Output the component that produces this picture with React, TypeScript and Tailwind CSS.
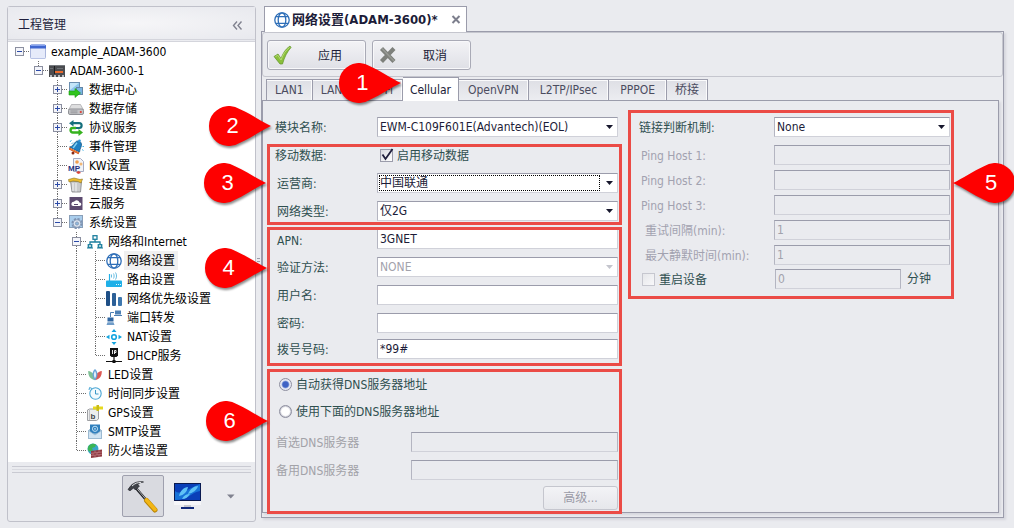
import React, { useState, type ReactNode } from "react";

const ROOT_FONT =
  "font-['DejaVu_Sans_Condensed','Noto_Sans_CJK_SC',sans-serif]";

/* ---------- tree icons, all on a 16x16 grid ---------- */

function Svg({ children, size = 16 }: { children: ReactNode; size?: number }) {
  return (
    <svg width={size} height={size} viewBox="0 0 16 16" className="block shrink-0" aria-hidden="true">
      {children}
    </svg>
  );
}

const GlobeIcon = () => (
  <Svg>
    <g fill="none" stroke="#2f6fb8" strokeWidth="1.3">
      <circle cx="8" cy="8" r="7.200" />
      <ellipse cx="8" cy="8" rx="3.8" ry="7.200" />
      <path d="M2 4.6h12M2 11.4h12" />
    </g>
  </Svg>
);

const icons: Record<string, ReactNode> = {
  project: (
    <Svg>
      <rect x="0.5" y="1.5" width="15" height="13" rx="1" fill="#e6ebfa" stroke="#aab6dc" />
      <path d="M0 2a1.5 1.5 0 0 1 1.500-1.500h13A1.500 1.500 0 0 1 16 2v2.500H0z" fill="#3f66cf" />
      <path d="M1 1.500h14" stroke="#86a3ee" />
      <path d="M1 14.500h14" stroke="#b9c4e6" />
    </Svg>
  ),
  device: (
    <Svg>
      <rect x="0" y="2" width="16" height="12" fill="#4a4c50" />
      <path d="M0 2.500h16" stroke="#777b80" />
      <rect x="5" y="3" width="1" height="8" fill="#1d1e20" />
      <rect x="6" y="8" width="8" height="2" fill="#ea6a2c" />
      <path d="M1 12h2v2H1zM5 12h2v2H5zM9 12h2v2H9zM13 12h2v2h-2z" fill="#b9bcc0" />
      <path d="M1 5.500h3M8 5.500h6" stroke="#6d7176" />
    </Svg>
  ),
  dataCenter: (
    <Svg>
      <rect x="1.500" y="0.500" width="10" height="9" fill="#8cc6ec" stroke="#6b8fb0" />
      <path d="M2 1l9 0L2 8z" fill="#c4e5f8" />
      <rect x="8.500" y="5.500" width="6" height="7" fill="#79b4e2" stroke="#6486a6" />
      <path d="M1 9h6V6.500L12.500 11 7 15.500V13H1z" fill="#2fc41c" stroke="#189a10" strokeWidth="0.600" />
    </Svg>
  ),
  drive: (
    <Svg>
      <path d="M3.500 3.500h9l3 5.500h-15z" fill="#dededf" stroke="#a3a4a8" strokeWidth="0.700" />
      <rect x="0.500" y="8" width="15" height="5.500" rx="1.500" fill="#c2c3c6" stroke="#8f9095" />
      <path d="M2.500 10h7M2.500 11.800h7" stroke="#8b8c90" strokeWidth="0.800" />
      <circle cx="12.800" cy="11" r="1.100" fill="#e03b32" />
    </Svg>
  ),
  protocol: (
    <Svg>
      <path d="M4 3.200h7.200a2.300 2.300 0 0 1 0 4.800H8" fill="none" stroke="#156f7c" strokeWidth="2.200" />
      <path d="M5.500 0v6.400L1 3.200z" fill="#156f7c" />
      <path d="M11 12.500H4.800a2.200 2.200 0 0 1 0-4.500H8" fill="none" stroke="#36b21f" strokeWidth="2.400" />
      <path d="M10.500 9v7l4.500-3.500z" fill="#36b21f" />
    </Svg>
  ),
  event: (
    <Svg>
      <path d="M8 2.500C10 1 13 2.500 13.500 5c.4 2.500-1.500 4-2 8L1.500 8C5 7.500 6 4 8 2.500z" fill="#1e7fc2" stroke="#10527f" strokeWidth="0.700" />
      <path d="M9 3.800C7.500 5 7 7.500 5 8.800" stroke="#7fd2f5" strokeWidth="1.500" fill="none" />
      <path d="M1.300 8.500l10 5-.8 1.700L1 10.500z" fill="#d43a1c" />
      <path d="M1.600 9.600l9 4.600" stroke="#f2b632" strokeWidth="0.700" />
      <circle cx="5" cy="14" r="1.500" fill="#8a2a14" />
      <circle cx="11.500" cy="1.800" r="1.300" fill="#2a93d4" />
      <path d="M2 3l1.500-2M3.500 5L5 3.500M14.500 7.500h1.500M14 10.500l1.500 1" stroke="#4fb9ea" />
    </Svg>
  ),
  kw: (
    <Svg>
      <path d="M5.500 0.500h7l3 3v10h-10z" fill="#f2f3f8" stroke="#a6acc4" />
      <circle cx="9" cy="4" r="1.800" fill="#f3a04e" />
      <circle cx="13" cy="6" r="1.500" fill="#f0b676" />
      <path d="M8 14l3-1 2 2-3 1z" fill="#d8443a" />
      <text x="0" y="13" fontSize="8" fontWeight="700" fill="#26307f" fontFamily="Liberation Sans, sans-serif">MP</text>
    </Svg>
  ),
  connect: (
    <Svg>
      <path d="M2.500 4l11 1-1 10H4z" fill="#c9cacc" stroke="#808186" strokeWidth="0.800" />
      <path d="M5 6v8M8 6v8.500" stroke="#efeff0" strokeWidth="1.200" />
      <path d="M0.500 2.500L6 1l6 1.500 2.500-.5L13 6l-3-1.500L5 4 1 5z" fill="#eebc2e" stroke="#8c7420" strokeWidth="0.600" />
    </Svg>
  ),
  cloud: (
    <Svg>
      <rect x="1.500" y="1" width="13" height="13" fill="#5d4b70" />
      <path d="M5 10h6.500a1.800 1.800 0 0 0 0-3.600 3 3 0 0 0-5.500-.6A2.100 2.100 0 0 0 5 10z" fill="#fff" />
      <path d="M6 8.500h4" stroke="#5d4b70" />
    </Svg>
  ),
  system: (
    <Svg>
      <rect x="1.500" y="0.500" width="13" height="12" fill="#a9cdec" stroke="#8a9fb8" />
      <circle cx="9" cy="8.500" r="4.600" fill="none" stroke="#7d92b2" strokeWidth="2" strokeDasharray="2.200 1.400" />
      <circle cx="9" cy="8.500" r="3.800" fill="#dfe7f2" stroke="#7f93ae" strokeWidth="0.800" />
      <circle cx="9" cy="8.500" r="1.600" fill="#8fb9e0" stroke="#7f93ae" strokeWidth="0.800" />
    </Svg>
  ),
  lan: (
    <Svg>
      <g fill="none" stroke="#1d7f9e" strokeWidth="1.300">
        <rect x="6" y="1.700" width="4" height="3.600" />
        <path d="M8 5.500V8M3 11V8h10v3" />
        <rect x="1.300" y="10.700" width="3.400" height="2.600" />
        <rect x="11.300" y="10.700" width="3.400" height="2.600" />
      </g>
      <path d="M0 14h6M10 14h6" stroke="#1d7f9e" />
    </Svg>
  ),
  globe: <GlobeIcon />,
  router: (
    <Svg>
      <rect x="0" y="8.500" width="16" height="6.500" rx="0.800" fill="#1fb0e8" />
      <path d="M3.500 2v7" stroke="#1fb0e8" strokeWidth="1.200" />
      <path d="M5.500 2.500v3M7.500 1.500c.8 1.300.8 3.700 0 5M9.500 0.500c1.400 2 1.400 5 0 7" stroke="#58b4de" fill="none" strokeWidth="0.900" />
      <path d="M10 12.500h1M12 12.500h1M14 12.500h1" stroke="#dff5fd" />
    </Svg>
  ),
  priority: (
    <Svg>
      <rect x="0" y="0" width="4" height="15" rx="1" fill="#1f4f86" />
      <rect x="6" y="2" width="4" height="13" rx="1" fill="#2d6097" />
      <rect x="12" y="6" width="4" height="9" rx="1" fill="#3f78ae" />
    </Svg>
  ),
  port: (
    <Svg>
      <rect x="9" y="0.500" width="6" height="4" fill="#4d80b4" />
      <path d="M8 5.500h8" stroke="#4d80b4" />
      <path d="M4.500 7V2.500H8" stroke="#4d80b4" fill="none" />
      <rect x="1.500" y="7.500" width="6" height="4" fill="#2f66a2" />
      <path d="M0.500 15l1-2.800h6l1 2.800z" fill="#6f9cc8" />
    </Svg>
  ),
  nat: (
    <Svg>
      <circle cx="8" cy="8" r="2.300" fill="none" stroke="#14a5e0" strokeWidth="1.600" />
      <path d="M8 0l2.500 3h-5zM8 16l2.500-3h-5zM0 8l3.500-2.300v4.600zM16 8l-3.500-2.300v4.600z" fill="#14a5e0" />
    </Svg>
  ),
  dhcp: (
    <Svg>
      <path d="M4 0h8v7.500L10.500 9h-5L4 7.500z" fill="#111" />
      <path d="M6.500 2v4M8.500 6V2.500h1.500v2H8.500" stroke="#fff" strokeWidth="0.900" fill="none" />
      <path d="M8 9v4M0 13.500h16" stroke="#111" strokeWidth="1.200" />
      <rect x="6.500" y="12" width="3" height="3" fill="#111" />
    </Svg>
  ),
  led: (
    <Svg>
      <path d="M8 13C3.500 12.500 1 9 1.200 4 5.500 4.500 8 8 8 13z" fill="#7fc096" />
      <path d="M8 13c4.500-.5 7-4 6.800-9C10.500 4.500 8 8 8 13z" fill="#dd5a55" />
      <path d="M8 13.500C4.500 9.500 5 4.500 8 2c3 2.500 3.500 7.500 0 11.500z" fill="#6ba4d8" />
      <path d="M8 11.500c-1.500-3-1.500-5 0-7.500 1.500 2.500 1.500 4.500 0 7.500z" fill="#e3effa" />
    </Svg>
  ),
  clock: (
    <Svg>
      <circle cx="8.500" cy="7.500" r="5.700" fill="#f3fafe" stroke="#4aa6d4" strokeWidth="1.100" />
      <path d="M8.500 4v4h3" fill="none" stroke="#3b98c8" />
      <path d="M2 4l.6-2.500L5 2.500" fill="none" stroke="#4aa6d4" />
    </Svg>
  ),
  gps: (
    <Svg>
      <path d="M0.500 5l2-1h9v10l-2 1.500h-9z" fill="#eceded" stroke="#9d9fa3" />
      <path d="M2.500 5v10" stroke="#c0c2c6" />
      <path d="M6 1.500h10v3H6z" fill="#e6d91f" />
      <path d="M9.500 0h2.500v6H9.500z" fill="#c9bb17" />
      <text x="3.500" y="13.500" fontSize="8" fontWeight="700" fill="#41464c" fontFamily="Liberation Sans, sans-serif">b</text>
    </Svg>
  ),
  smtp: (
    <Svg>
      <path d="M1.500 6.500L8 2l6.500 4.500v8h-13z" fill="#a9c8e0" stroke="#8fb0ca" />
      <rect x="3" y="0.500" width="10" height="9" fill="#2f7fbd" />
      <circle cx="8" cy="4.800" r="2.600" fill="none" stroke="#bfe0f5" />
      <circle cx="8" cy="4.800" r="0.900" fill="#bfe0f5" />
      <path d="M1.500 6.500L8 11l6.500-4.500v8h-13z" fill="#cfe3f2" stroke="#93b3cc" strokeWidth="0.700" />
    </Svg>
  ),
  firewall: (
    <Svg>
      <circle cx="6" cy="6" r="5.500" fill="#3aa6c8" />
      <path d="M2 2.500c2-2 5-2.500 7-1L8 4 5 5l1 2.500-4 1C0 6 1 4 2 2.500z" fill="#3cb554" />
      <path d="M4 8l11-1.500v7L4 15z" fill="#8e3a42" />
      <path d="M4 10.300l11-1.300M4 12.600l11-1.300M8 7.500v2.300M12 7V9.300M6 10.200v2.200M10 9.700v2.200M8 12.300v2.200M12 11.700V14" stroke="#c98a90" strokeWidth="0.600" />
    </Svg>
  ),
};

/* ---------- tree ---------- */

type Guide = "none" | "line" | "tee" | "end";

function Connector({ guide, state }: { guide: Guide; state?: "open" | "closed" }) {
  return (
    <svg width="19" height="19" viewBox="0 0 19 19" className="block shrink-0" aria-hidden="true" shapeRendering="crispEdges">
      <g stroke="#6d6d6d" strokeWidth="1" strokeDasharray="1 1" fill="none">
        {guide !== "none" && <path d={guide === "end" ? "M9.500 0v10" : "M9.500 0v19"} />}
        {guide === "line" ? null : (guide !== "none" || state) && <path d="M10 9.500h9" />}
      </g>
      {state && (
        <>
          <rect x="5.500" y="5.500" width="8" height="8" fill="#f4f5fa" stroke="#8b8fa0" />
          <path d={state === "open" ? "M7 9.500h5" : "M7 9.500h5M9.500 7v5"} stroke="#2b4aa8" />
        </>
      )}
    </svg>
  );
}

type Node = {
  label: string;
  icon: string;
  guides: Guide[];
  state?: "open" | "closed";
};

const top: Guide[] = ["none", "none"];
const sys: Guide[] = ["none", "none", "none"];
const net: Guide[] = ["none", "none", "none", "line"];

const nodes: Node[] = [
  { label: "example_ADAM-3600", icon: "project", guides: ["none"], state: "open" },
  { label: "ADAM-3600-1", icon: "device", guides: ["none", "end"], state: "open" },
  { label: "数据中心", icon: "dataCenter", guides: [...top, "tee"], state: "closed" },
  { label: "数据存储", icon: "drive", guides: [...top, "tee"], state: "closed" },
  { label: "协议服务", icon: "protocol", guides: [...top, "tee"], state: "closed" },
  { label: "事件管理", icon: "event", guides: [...top, "tee"] },
  { label: "KW设置", icon: "kw", guides: [...top, "tee"] },
  { label: "连接设置", icon: "connect", guides: [...top, "tee"], state: "closed" },
  { label: "云服务", icon: "cloud", guides: [...top, "tee"], state: "closed" },
  { label: "系统设置", icon: "system", guides: [...top, "end"], state: "open" },
  { label: "网络和Internet", icon: "lan", guides: [...sys, "tee"], state: "open" },
  { label: "网络设置", icon: "globe", guides: [...net, "tee"] },
  { label: "路由设置", icon: "router", guides: [...net, "tee"] },
  { label: "网络优先级设置", icon: "priority", guides: [...net, "tee"] },
  { label: "端口转发", icon: "port", guides: [...net, "tee"] },
  { label: "NAT设置", icon: "nat", guides: [...net, "tee"] },
  { label: "DHCP服务", icon: "dhcp", guides: [...net, "end"] },
  { label: "LED设置", icon: "led", guides: [...sys, "tee"] },
  { label: "时间同步设置", icon: "clock", guides: [...sys, "tee"] },
  { label: "GPS设置", icon: "gps", guides: [...sys, "tee"] },
  { label: "SMTP设置", icon: "smtp", guides: [...sys, "tee"] },
  { label: "防火墙设置", icon: "firewall", guides: [...sys, "end"] },
];

function ProjectTree() {
  const [selected, setSelected] = useState("网络设置");
  return (
    <ul role="tree" className="bg-white pb-0.5 pl-0.5 text-black">
      {nodes.map((n) => (
        <li
          key={n.label}
          role="treeitem"
          aria-level={n.guides.length}
          aria-selected={selected === n.label}
          className="flex h-[19px] items-center"
        >
          {n.guides.map((g, i) => (
            <Connector key={i} guide={g} state={i === n.guides.length - 1 ? n.state : undefined} />
          ))}
          <span className="flex w-[19px] shrink-0 pl-px">{icons[n.icon]}</span>
          <button
            type="button"
            onClick={() => setSelected(n.label)}
            className={`h-[19px] px-[3px] whitespace-nowrap ${selected === n.label ? "bg-[#f0f0f0]" : ""}`}
          >
            {n.label}
          </button>
        </li>
      ))}
    </ul>
  );
}

function Sidebar() {
  return (
    <aside className="w-[249px] shrink-0 rounded-[3px] border border-[#c0c1ca] bg-[#eaebef]">
      <div className="flex h-[35px] items-center justify-between border-b-[3px] border-double border-[#d4d5dc] bg-radial from-[#f6f6f8] to-[#e8e9ee] pt-1 pr-2.5 pl-2.5 text-[#1e1e3c]">
        <h2>工程管理</h2>
        <button type="button" aria-label="收起" className="p-0.5">
          <svg width="11" height="9" viewBox="0 0 11 9" fill="none" stroke="#80828f" strokeWidth="1.400" aria-hidden="true">
            <path d="M5 0.500L1.500 4.500 5 8.500M9.500 0.500L6 4.500l3.500 4" />
          </svg>
        </button>
      </div>
      <ProjectTree />
      <div className="mx-1 h-[13px] pt-0.5">
        <div className="h-[3px] border-b border-[#c9cad2]" />
        <div className="h-[3px] border-b border-[#d9dae0]" />
        <div className="h-[3px] border-b border-[#c9cad2]" />
      </div>
      <div className="flex items-center pb-1 pl-[114px]">
        <button type="button" aria-label="工程" className="flex size-[42px] items-center justify-center rounded-[2px] border border-[#9fa0ae] bg-[#d9dae0]">
          <svg width="34" height="34" viewBox="0 0 34 34" aria-hidden="true">
            <path d="M9 8l12 14" stroke="#1f2125" strokeWidth="2.600" />
            <path d="M10 8.500l10 12" stroke="#c9ccd0" strokeWidth="0.800" />
            <path d="M20.500 21.500L29 31" stroke="#b88408" strokeWidth="5" strokeLinecap="round" />
            <path d="M20.500 21L29 30.500" stroke="#f2b616" strokeWidth="3.600" strokeLinecap="round" />
            <path d="M2 10.500l3-4C8 3.500 12.500 2 17.500 3c-3 .3-4.500 1-5.500 2.500l1.300 1.700L9.500 11 7.500 9 4 11.800z" fill="#3e4147" stroke="#222429" strokeWidth="0.700" />
            <path d="M6 7c3-2.800 5.500-3.500 9-3.600" stroke="#e4e6e9" fill="none" />
          </svg>
        </button>
        <button type="button" aria-label="在线设备" className="ml-[9px] p-px">
          <svg width="27" height="28" viewBox="0 0 27 28" aria-hidden="true">
            <rect x="0" y="1" width="27" height="18" fill="#0a1a50" />
            <rect x="1" y="2" width="25" height="16" fill="#0a3fb8" />
            <path d="M1 18V9C7 14 15 6 26 2v7c-8 1-12 9-25 9z" fill="#1672d8" />
            <path d="M5 14c1-5 5-9 9-9-1 5-4 8-9 9zM14 12c2-5 6-8 10-8-1 4-5 7-10 8zM8 17c2-4 5-5 8-5-2 3-4 5-8 5z" fill="#5fc2f6" />
            <path d="M0 19h27v4H0z" fill="#f6f6f9" />
            <path d="M10 23h7v2h-7z" fill="#c5c7cf" />
            <path d="M7 26h13" stroke="#10287a" strokeWidth="2" />
          </svg>
        </button>
        <button type="button" aria-label="更多" className="ml-[21px] p-1">
          <svg width="8" height="5" viewBox="0 0 8 5" aria-hidden="true">
            <path d="M0 0.500h7.500L3.800 4.500z" fill="#80828f" />
          </svg>
        </button>
      </div>
    </aside>
  );
}

/* ---------- annotation pin ---------- */

function Pin({ n, className, flip = false }: { n: number; className: string; flip?: boolean }) {
  return (
    <div className={`pointer-events-none absolute z-10 h-10 w-[62px] ${className}`}>
      <svg width="62" height="40" viewBox="0 0 62 40" className="block overflow-visible drop-shadow-[1px_2px_1px_rgba(0,0,0,0.45)]" aria-hidden="true">
        <path
          d="M62 20C52 15.500 42 8 31 3.300A20 20 0 1 0 31 36.700C42 32 52 24.500 62 20Z"
          fill="#fe0000"
          transform={flip ? "matrix(-1 0 0 1 62 0)" : undefined}
        />
      </svg>
      <span
        className={`absolute top-0 flex h-10 w-10 items-center justify-center font-['Liberation_Sans',sans-serif] text-[22px] text-white ${flip ? "right-0 pr-2" : "left-0 pl-[7px]"}`}
      >
        {n}
      </span>
    </div>
  );
}

/* ---------- form controls ---------- */

const FIELD =
  "block h-5 w-full min-w-0 rounded-none border border-t-[#9b9cab] border-l-[#b4b5c1] border-r-[#d0d1d9] border-b-[#d0d1d9] pl-0.5 text-[#1c1c38] outline-none";

function TextField({ id, value = "", disabled = false, className = "" }: { id: string; value?: string; disabled?: boolean; className?: string }) {
  return (
    <input
      id={id}
      type="text"
      defaultValue={value}
      disabled={disabled}
      className={`${FIELD} disabled:border-r-[#b4b5c1] disabled:bg-[#eaebef] disabled:text-[#a2a2ac] ${disabled ? "" : "bg-white"} ${className}`}
    />
  );
}

function SelectField({ id, value, options = [], disabled = false, dotted = false }: { id: string; value: string; options?: string[]; disabled?: boolean; dotted?: boolean }) {
  return (
    <div className="relative w-full">
      <select id={id} defaultValue={value} disabled={disabled} className={`${FIELD} appearance-none bg-white pr-5 disabled:text-[#a2a2ac] disabled:opacity-100`}>
        {[value, ...options].map((o) => (
          <option key={o}>{o}</option>
        ))}
      </select>
      {dotted && <span className="pointer-events-none absolute inset-y-0.5 right-[18px] left-0.5 border border-dotted border-black" />}
      <svg width="7" height="4" viewBox="0 0 7 4" className="pointer-events-none absolute top-2 right-[5px]" aria-hidden="true">
        <path d="M0 0h7L3.500 4z" fill={disabled ? "#c4c5cd" : "#16162c"} />
      </svg>
    </div>
  );
}

function Row({ label, htmlFor, labelClass, className = "", children }: { label: string; htmlFor: string; labelClass: string; className?: string; children: ReactNode }) {
  return (
    <div className={`flex items-center ${className}`}>
      <label htmlFor={htmlFor} className={`shrink-0 pt-0.5 whitespace-nowrap ${labelClass}`}>
        {label}
      </label>
      {children}
    </div>
  );
}

const LEFT = "w-[107px] pl-[7px]";
const DIM_LEFT = "w-[141px] pl-1.5 text-[#a2a2a8]";
const RIGHT = "w-[143px] pl-2";
const DIM_RIGHT = "w-[143px] pl-2.5 text-[#a2a2b0]";
const DIM_RIGHT_IN = "w-[143px] pl-3.5 text-[#a2a2b0]";
const MARK = "relative border-[3px] border-[#eb4b46]";

function CheckBox({ id, label, checked = false, disabled = false }: { id: string; label: string; checked?: boolean; disabled?: boolean }) {
  return (
    <div className="flex items-center">
      <span className="relative mr-1 block size-[13px]">
        <input
          id={id}
          type="checkbox"
          defaultChecked={checked}
          disabled={disabled}
          className="peer block size-[13px] appearance-none border border-[#9b9cab] bg-linear-to-br from-[#d8d9e0] to-white disabled:border-[#c6c7cf] disabled:bg-linear-to-br disabled:from-[#e6e7ea] disabled:to-[#f8f8fa]"
        />
        <svg width="14" height="14" viewBox="0 0 14 14" className="pointer-events-none absolute -top-px left-0 hidden peer-checked:block" aria-hidden="true">
          <path d="M2.500 6.500L5.500 11 12.500 1" fill="none" stroke="#1e1e3c" strokeWidth="1.800" />
        </svg>
      </span>
      <label htmlFor={id} className="pt-0.5">
        {label}
      </label>
    </div>
  );
}

function Radio({ id, label, checked = false }: { id: string; label: string; checked?: boolean }) {
  return (
    <div className="flex h-5 items-center pl-[9px]">
      <input
        id={id}
        type="radio"
        name="dns"
        defaultChecked={checked}
        className="mr-1 block size-[13px] appearance-none rounded-full border border-[#8e8fa0] bg-radial from-white from-50% to-[#c5c6d0] to-70% checked:from-[#3f62c4] checked:from-35% checked:to-[#e6e8f2] checked:to-55%"
      />
      <label htmlFor={id} className="pt-0.5">
        {label}
      </label>
    </div>
  );
}

/* ---------- main document ---------- */

const tabs = [
  { name: "LAN1", pad: "px-2" },
  { name: "LAN2", pad: "px-2" },
  { name: "Wi-Fi", pad: "px-[9px]" },
  { name: "Cellular", pad: "px-[7px]" },
  { name: "OpenVPN", pad: "px-[9px]" },
  { name: "L2TP/IPsec", pad: "px-[11px]" },
  { name: "PPPOE", pad: "px-[11px]" },
  { name: "桥接", pad: "px-2" },
];

function Tabs() {
  return (
    <div role="tablist" className="relative z-[1] -mb-px flex items-end pl-1">
      {tabs.map(({ name, pad }) =>
        name === "Cellular" ? (
          <button key={name} type="button" role="tab" aria-selected="true" className={`relative h-6 border border-b-0 border-l-0 border-[#9b9cab] bg-white whitespace-nowrap text-[#1c1c38] ${pad}`}>
            {name}
            <Pin n={1} className="-top-[15px] right-full mr-0.5" />
          </button>
        ) : (
          <button key={name} type="button" role="tab" aria-selected="false" className={`h-[22px] border border-l-0 border-[#9b9cab] bg-linear-to-b from-[#dedfe5] to-[#ecedf1] whitespace-nowrap text-[#4b4c5f] shadow-[inset_-1px_1px_0_#fbfbfc] first:border-l ${pad}`}>
            {name}
          </button>
        ),
      )}
    </div>
  );
}

const TOOL =
  "flex h-[30px] w-[99px] items-center rounded-[3px] border border-[#a9aab6] bg-linear-to-b from-[#f3f3f6] to-[#dfe0e6] pl-[5px] text-[#1c1c38] shadow-[inset_0_0_0_1px_#f8f8fa]";

function Document() {
  return (
    <main className="flex min-w-0 flex-1 flex-col">
      <div className="z-[1] -mb-px flex">
        <div className="ml-[3px] flex h-[26px] items-center border border-b-0 border-[#9b9cab] bg-white pr-1 pl-[9px]">
          <GlobeIcon />
          <span className="ml-0.5 text-[13px] font-bold text-[#1c1c38]">网络设置(ADAM-3600)*</span>
          <button type="button" aria-label="关闭" className="ml-3 px-px">
            <svg width="10" height="9" viewBox="0 0 10 9" aria-hidden="true">
              <path d="M1.500 1l7 7M8.500 1l-7 7" stroke="#7d7f8d" strokeWidth="2" />
            </svg>
          </button>
        </div>
      </div>

      <div className="border border-[#9b9cab] pb-1 shadow-[2px_2px_2px_#d6d7de]">
        <div className="flex h-[45px] items-center gap-1.5 rounded-[3px] border border-[#c5c6ce] px-1">
          <button type="button" className={TOOL}>
            <svg width="20" height="20" viewBox="0 0 20 20" aria-hidden="true">
              <path d="M1 11.500L5 9l3 4.500C10 8 12.500 4 17 1l1 1.500C14 7 11.500 12 9.500 19H7z" fill="#8abf3c" stroke="#5f9427" strokeWidth="0.700" />
              <path d="M2.500 11.500l2.300-1.200L8 15C10 9 12.500 5.500 16.500 2.500" fill="none" stroke="#b6dc72" />
            </svg>
            <span className="ml-[25px] pt-0.5">应用</span>
          </button>
          <button type="button" className={TOOL}>
            <svg width="20" height="20" viewBox="0 0 20 20" aria-hidden="true">
              <path d="M3.500 3.500l12.500 13M16 3.500L3.500 16.500" stroke="#7e807c" strokeWidth="4.200" />
              <path d="M4 3.500l12 12.500" stroke="#979994" strokeWidth="1.500" />
            </svg>
            <span className="ml-[25px] pt-0.5">取消</span>
          </button>
        </div>

        <Tabs />

        <div role="tabpanel" className="mr-1 flex items-start gap-1.5 border border-[#9b9cab] pl-1 text-[#2f4f4f] shadow-[2px_2px_2px_#d6d7de]">
          <div className="w-[355px] pt-4">
            <div className="relative pr-1 pl-[3px]">
              <Row label="模块名称:" htmlFor="module" labelClass="w-[107px] pl-[5px]">
                <SelectField id="module" value="EWM-C109F601E(Advantech)(EOL)" />
              </Row>
              <Pin n={2} className="-top-[11px] right-[351px]" />
            </div>

            <section className={`${MARK} mt-[7px] pr-px pb-px`}>
              <div className="flex h-4 items-center">
                <span className="w-[110px] shrink-0 pt-0.5 pl-[5px]">移动数据:</span>
                <CheckBox id="mobile" label="启用移动数据" checked />
              </div>
              <Row label="运营商:" htmlFor="carrier" labelClass={LEFT} className="mt-2.5">
                <SelectField id="carrier" value="中国联通" options={["中国移动", "中国电信"]} dotted />
              </Row>
              <Row label="网络类型:" htmlFor="nettype" labelClass={LEFT} className="mt-2">
                <SelectField id="nettype" value="仅2G" options={["仅3G", "仅4G"]} />
              </Row>
              <Pin n={3} className="top-4 right-full mr-1" />
            </section>

            <section className={`${MARK} mt-0.5 pr-px pb-1`}>
              <Row label="APN:" htmlFor="apn" labelClass={LEFT}>
                <TextField id="apn" value="3GNET" className="h-[19px] border-t-0" />
              </Row>
              <Row label="验证方法:" htmlFor="auth" labelClass={LEFT} className="mt-2">
                <SelectField id="auth" value="NONE" disabled />
              </Row>
              <Row label="用户名:" htmlFor="user" labelClass={LEFT} className="mt-2">
                <TextField id="user" />
              </Row>
              <Row label="密码:" htmlFor="password" labelClass={LEFT} className="mt-2">
                <TextField id="password" />
              </Row>
              <Row label="拨号号码:" htmlFor="dial" labelClass={LEFT} className="mt-1.5">
                <TextField id="dial" value="*99#" />
              </Row>
              <Pin n={4} className="top-[18px] right-full mr-[3px]" />
            </section>

            <section className={`${MARK} mt-[3px] -mb-0.5 pt-0.5 pr-px pb-px`}>
              <Radio id="dns-auto" label="自动获得DNS服务器地址" checked />
              <div className="mt-[7px]">
                <Radio id="dns-manual" label="使用下面的DNS服务器地址" />
              </div>
              <Row label="首选DNS服务器" htmlFor="dns1" labelClass={DIM_LEFT} className="mt-[11px]">
                <TextField id="dns1" disabled />
              </Row>
              <Row label="备用DNS服务器" htmlFor="dns2" labelClass={DIM_LEFT} className="mt-2">
                <TextField id="dns2" disabled />
              </Row>
              <div className="mt-1.5 flex justify-end">
                <button type="button" disabled className="h-6 w-[75px] rounded-[3px] border border-[#c5c6ce] bg-linear-to-b from-[#f3f3f6] to-[#e6e7eb] text-[#9a9aa6]">
                  高级...
                </button>
              </div>
              <Pin n={6} className="top-[29px] right-full mr-0.5" />
            </section>
          </div>

          <section className={`${MARK} mt-[9px] w-[326px] pt-1 pr-px pb-[7px]`}>
            <Row label="链接判断机制:" htmlFor="mechanism" labelClass={RIGHT}>
              <SelectField id="mechanism" value="None" options={["Ping"]} />
            </Row>
            <Row label="Ping Host 1:" htmlFor="ping1" labelClass={DIM_RIGHT} className="mt-2">
              <TextField id="ping1" disabled />
            </Row>
            <Row label="Ping Host 2:" htmlFor="ping2" labelClass={DIM_RIGHT} className="mt-[5px]">
              <TextField id="ping2" disabled />
            </Row>
            <Row label="Ping Host 3:" htmlFor="ping3" labelClass={DIM_RIGHT} className="mt-[5px]">
              <TextField id="ping3" disabled />
            </Row>
            <Row label="重试间隔(min):" htmlFor="retry" labelClass={DIM_RIGHT_IN} className="mt-[5px]">
              <TextField id="retry" value="1" disabled />
            </Row>
            <Row label="最大静默时间(min):" htmlFor="silent" labelClass={DIM_RIGHT_IN} className="mt-[5px]">
              <TextField id="silent" value="1" disabled />
            </Row>
            <div className="mt-1 flex items-center">
              <div className="w-36 shrink-0 pl-[11px]">
                <CheckBox id="restart" label="重启设备" disabled />
              </div>
              <div className="w-[126px]">
                <TextField id="restart-after" value="0" disabled />
              </div>
              <label htmlFor="restart-after" className="ml-1.5">
                分钟
              </label>
            </div>
            <Pin n={5} flip className="top-[50px] left-full ml-0.5" />
          </section>
        </div>
      </div>
    </main>
  );
}

export default function App() {
  return (
    <div className={`flex min-h-screen items-start overflow-x-clip bg-[#eaebef] pt-1.5 pr-2.5 pl-[7px] text-[12px] leading-4 ${ROOT_FONT}`}>
      <Sidebar />
      <div className="flex w-[5px] shrink-0 flex-col items-center gap-0.5 pt-[252px]" aria-hidden="true">
        <span className="h-px w-[3px] bg-[#9b9cab]" />
        <span className="h-px w-[3px] bg-[#9b9cab]" />
        <span className="h-px w-[3px] bg-[#9b9cab]" />
      </div>
      <Document />
    </div>
  );
}
